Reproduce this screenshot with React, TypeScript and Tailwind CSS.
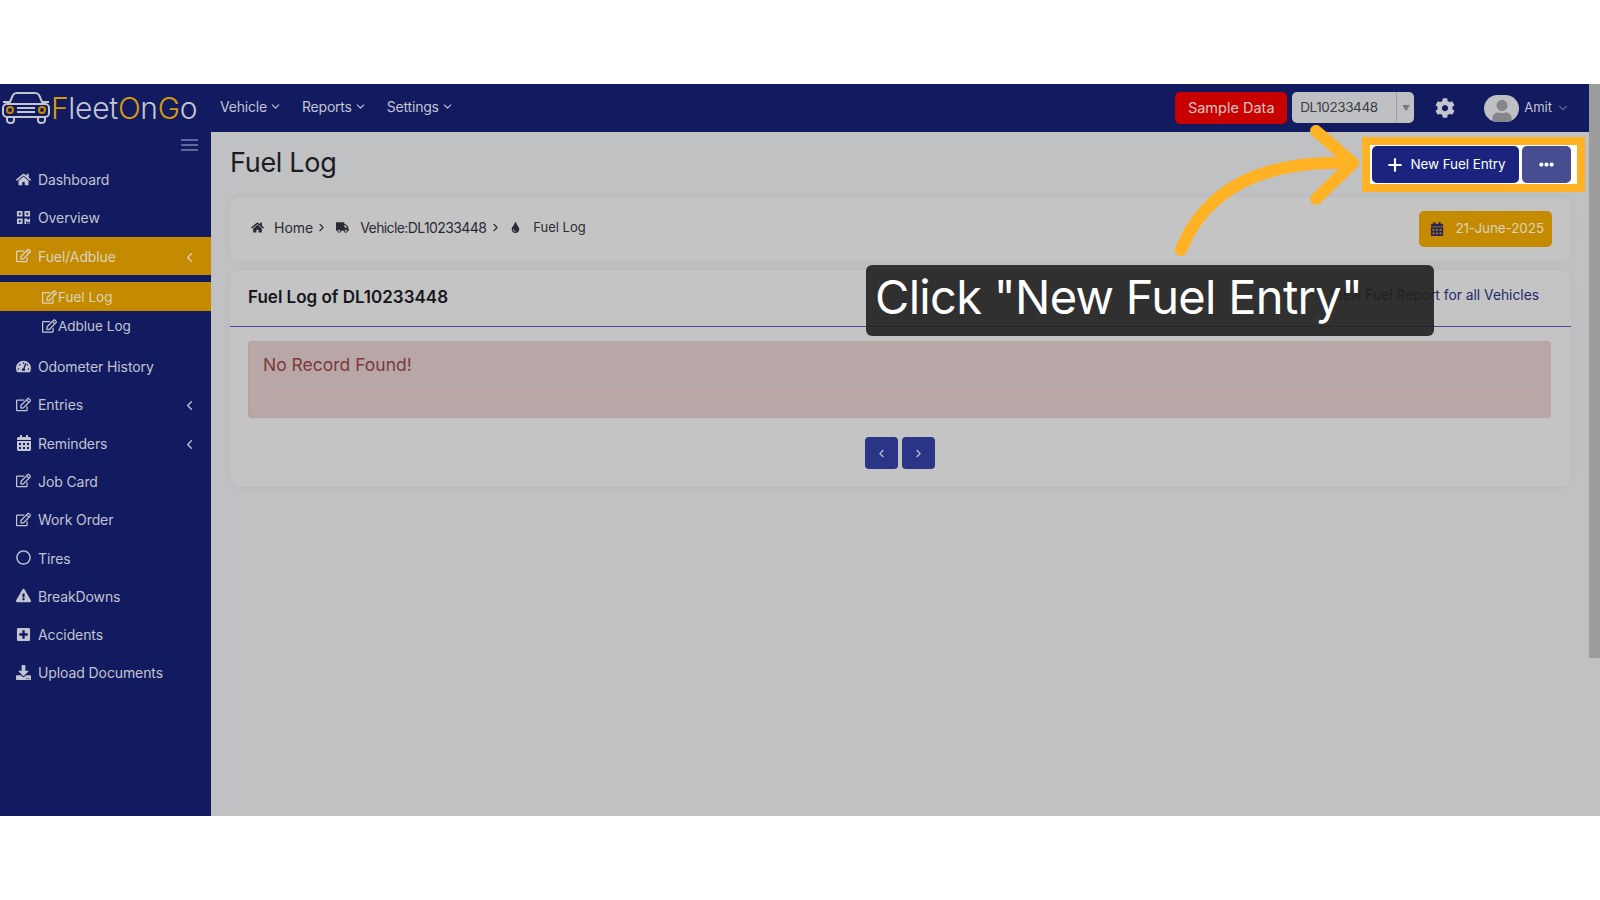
import React from "react";
import { FaHome, FaQrcode, FaRegEdit, FaTachometerAlt, FaCalendarAlt, FaRegCircle, FaExclamationTriangle, FaPlusSquare, FaDownload, FaCog, FaTruck, FaTint, FaUser, FaEllipsisH } from "react-icons/fa";
import { FiChevronDown, FiChevronLeft, FiChevronRight, FiPlus } from "react-icons/fi";

const font = { fontFamily: "Inter, 'Noto Sans', sans-serif" };

function Item({ icon, label, arrow, active }: { icon: React.ReactNode; label: string; arrow?: boolean; active?: boolean }) {
  return (
    <div className={`flex h-[38.3px] items-center pl-[16px] pr-[14px] text-[14px] tracking-[-0.1px] text-[#c3c5d0] ${active ? "bg-[#c48a00] text-[#d9d3bf]" : ""}`}>
      <span className="mb-[1px] flex w-[22px] shrink-0 items-center text-[15px]">{icon}</span>
      <span className="flex-1">{label}</span>
      {arrow && <FiChevronLeft className="mt-[2px] text-[15px]" />}
    </div>
  );
}

function Sub({ label, active }: { label: string; active?: boolean }) {
  return (
    <div className={`flex h-[29px] items-center pl-[42px] text-[13.5px] text-[#c3c5d0] ${active ? "bg-[#c48a00] text-[#d9d3bf]" : ""}`}>
      <FaRegEdit className="mr-[1px] w-[15px] text-[14px]" />
      <span>{label}</span>
    </div>
  );
}

function NavMenu({ label }: { label: string }) {
  return (
    <div className="flex items-center gap-[2px] text-[14px] tracking-[-0.2px] text-[#c3c5d0]">
      {label}
      <FiChevronDown className="text-[13px]" />
    </div>
  );
}

export default function App() {
  return (
    <div className="relative flex h-[900px] w-[1600px] flex-col overflow-hidden bg-white" style={font}>
      <div className="h-[84px]" />
      <div className="flex h-[732px]">
        <div className="flex min-w-0 flex-1 flex-col">
          <header className="flex h-[48px] items-center bg-[#121a60]">
            <div className="flex w-[220px] shrink-0 items-center pl-[1px]">
              <svg viewBox="0 0 50 34" className="mb-[1px] h-[34px] w-[50px]" fill="none" stroke="#c3c5d0" strokeWidth="2">
                <path d="M8 13 L12 4 Q13 2 16 2 H34 Q37 2 38 4 L42 13" />
                <path d="M2 11 H8 V14 M48 11 H42 V14" />
                <rect x="2" y="13" width="46" height="13" rx="4" />
                <path d="M6 26 V29 Q6 32 10 32 Q13 32 13 29 V26 M37 26 V29 Q37 32 40 32 Q44 32 44 29 V26" />
                <path d="M16 17 H34 M16 21 H34" />
                <circle cx="9" cy="19" r="3" stroke="#c48a00" />
                <circle cx="41" cy="19" r="3" stroke="#c48a00" />
              </svg>
              <span className="mb-[1px] text-[30px] font-light leading-none tracking-[-0.3px] text-[#c3c5d0]">
                <span className="text-[#d39a10]">F</span>leet<span className="text-[#d39a10]">O</span>n<span className="text-[#d39a10]">G</span>o
              </span>
            </div>
            <nav className="mb-[3px] flex items-center gap-[20px]">
              <NavMenu label="Vehicle" />
              <NavMenu label="Reports" />
              <NavMenu label="Settings" />
            </nav>
            <div className="ml-auto flex items-center pr-[19px]">
              <div className="flex h-[32px] w-[112px] items-center justify-center rounded-[5px] bg-[#c80000] text-[14.5px] text-[#d8c4c4]">Sample Data</div>
              <div className="mb-[1px] ml-[5px] flex h-[31px] w-[122px] items-center rounded-[5px] bg-[#bfc0c3] text-[13.5px] tracking-[-0.4px] text-[#3c3c46]">
                <span className="flex-1 pl-[8px]">DL10233448</span>
                <span className="flex h-full w-[18px] items-center justify-center border-l border-[#a0a0a4] text-[8px] text-[#77777c]">▼</span>
              </div>
              <FaCog className="ml-[21px] text-[20px] text-[#c3c5d0]" />
              <div className="ml-[29px] flex h-[27px] w-[35px] items-end justify-center overflow-hidden rounded-full bg-[#bfc0c3] text-[22px] text-[#85858c]">
                <FaUser />
              </div>
              <span className="mb-[1px] ml-[5px] text-[13px] text-[#c3c5d0]">Amit</span>
              <FiChevronDown className="ml-[4px] text-[14px] text-[#5a6290]" />
            </div>
          </header>
          <div className="flex min-h-0 flex-1">
            <aside className="w-[211px] shrink-0 bg-[#121a60]">
              <div className="flex h-[28.5px] items-start justify-end pr-[13px] pt-[7px]">
                <div className="flex w-[17px] flex-col gap-[3px]">
                  <div className="h-[2px] bg-[#5d6a9c]" />
                  <div className="h-[2px] bg-[#5d6a9c]" />
                  <div className="h-[2px] bg-[#5d6a9c]" />
                </div>
              </div>
              <Item icon={<FaHome />} label="Dashboard" />
              <Item icon={<FaQrcode />} label="Overview" />
              <Item icon={<FaRegEdit />} label="Fuel/Adblue" arrow active />
              <div className="py-[7px]">
                <Sub label="Fuel Log" active />
                <Sub label="Adblue Log" />
              </div>
              <Item icon={<FaTachometerAlt />} label="Odometer History" />
              <Item icon={<FaRegEdit />} label="Entries" arrow />
              <Item icon={<FaCalendarAlt className="text-[16px]" />} label="Reminders" arrow />
              <Item icon={<FaRegEdit />} label="Job Card" />
              <Item icon={<FaRegEdit />} label="Work Order" />
              <Item icon={<FaRegCircle />} label="Tires" />
              <Item icon={<FaExclamationTriangle />} label="BreakDowns" />
              <Item icon={<FaPlusSquare />} label="Accidents" />
              <Item icon={<FaDownload />} label="Upload Documents" />
            </aside>
            <main className="min-w-0 flex-1 bg-[#c0c1c3] pl-[19px] pr-[18px]">
              <div className="flex h-[65px] items-center justify-between">
                <h1 className="mb-[3px] text-[27px] tracking-[-0.3px] text-[#1c1c22]">Fuel Log</h1>
                <div className="mr-[-6px] flex gap-[3px] bg-white py-[1px] pl-[2px] pr-[6px] outline-[8px] outline-[#ffb224]">
                  <button className="flex h-[37px] w-[147px] items-center justify-center gap-[5px] rounded-[5px] bg-[#1a237e] text-[13.5px] tracking-[-0.1px] text-white">
                    <FiPlus className="text-[20px]" strokeWidth={2.6} />New Fuel Entry
                  </button>
                  <button className="flex h-[37px] w-[49px] items-center justify-center rounded-[5px] bg-[#464e91] text-[15px] text-white">
                    <FaEllipsisH />
                  </button>
                </div>
              </div>
              <section className="flex h-[64px] items-center justify-between rounded-[10px] bg-[#c4c4c4] pl-[21px] pr-[19px] text-[14px] text-[#2a2a36] shadow-[0_0_8px_rgba(0,0,0,0.04)]">
                <div className="mb-[3px] flex items-center">
                  <FaHome className="text-[13px]" />
                  <span className="ml-[10px]">Home</span>
                  <FiChevronRight className="ml-[2px] text-[13px]" />
                  <FaTruck className="ml-[8px] text-[13px]" />
                  <span className="ml-[11px] tracking-[-0.6px]">Vehicle:DL10233448</span>
                  <FiChevronRight className="ml-[3px] text-[13px]" />
                  <FaTint className="ml-[8px] text-[11px]" />
                  <span className="ml-[12px] text-[13px]">Fuel Log</span>
                </div>
                <div className="flex h-[36px] w-[133px] items-center justify-end gap-[11px] rounded-[5px] bg-[#c48a00] pb-[1px] pr-[8px] text-[13.5px] tracking-[-0.1px] text-[#d9d3bf]">
                  <FaCalendarAlt className="text-[14px] text-[#25255a]" />21-June-2025
                </div>
              </section>
              <section className="mt-[9px] h-[217px] rounded-[10px] bg-[#c4c4c4] shadow-[0_0_8px_rgba(0,0,0,0.04)]">
                <div className="flex h-[57px] items-center justify-between border-b border-[#3f4a9a] pl-[18px] pr-[32px]">
                  <h2 className="text-[17px] font-semibold text-[#16161c]">Fuel Log of DL10233448</h2>
                  <span className="mb-[6px] text-[13.8px] text-[#232a6c]">View Fuel Report for all Vehicles</span>
                </div>
                <div className="pl-[18px] pr-[20px] pt-[14px]">
                  <div className="h-[77px] rounded-[3px] border border-[#b5a3a3] bg-[#b9a7a7] px-[14px] pt-[10px]">
                    <div className="h-[33px] border-b border-[#a9a9b5] text-[17.5px] text-[#7a3a3a]">No Record Found!</div>
                  </div>
                  <div className="mt-[19px] flex justify-center gap-[4px]">
                    <button className="flex h-[32px] w-[33px] items-center justify-center rounded-[4px] bg-[#2a3587] text-[13px] text-[#c3c5d0]"><FiChevronLeft /></button>
                    <button className="flex h-[32px] w-[33px] items-center justify-center rounded-[4px] bg-[#2a3587] text-[13px] text-[#c3c5d0]"><FiChevronRight /></button>
                  </div>
                </div>
              </section>
            </main>
          </div>
        </div>
        <div className="w-[11px] shrink-0 bg-[#c0c1c3]">
          <div className="h-[574px] bg-[#9c9c9c]" />
        </div>
      </div>
      <svg className="pointer-events-none absolute left-0 top-0" width="1600" height="900" fill="none" stroke="#ffb224" strokeWidth="12" strokeLinecap="round" strokeLinejoin="round">
        <path d="M1181 250 C1205 190 1260 160 1350 163" />
        <path d="M1316 131 L1353 163 L1316 199" />
      </svg>
      <div className="absolute left-[866px] top-[265px] flex h-[71px] w-[568px] items-center rounded-[6px] bg-[#202020]/90 pb-[9px] pl-[9px] text-[47px] leading-none tracking-[-0.7px] text-white">
        Click "New Fuel Entry"
      </div>
    </div>
  );
}
